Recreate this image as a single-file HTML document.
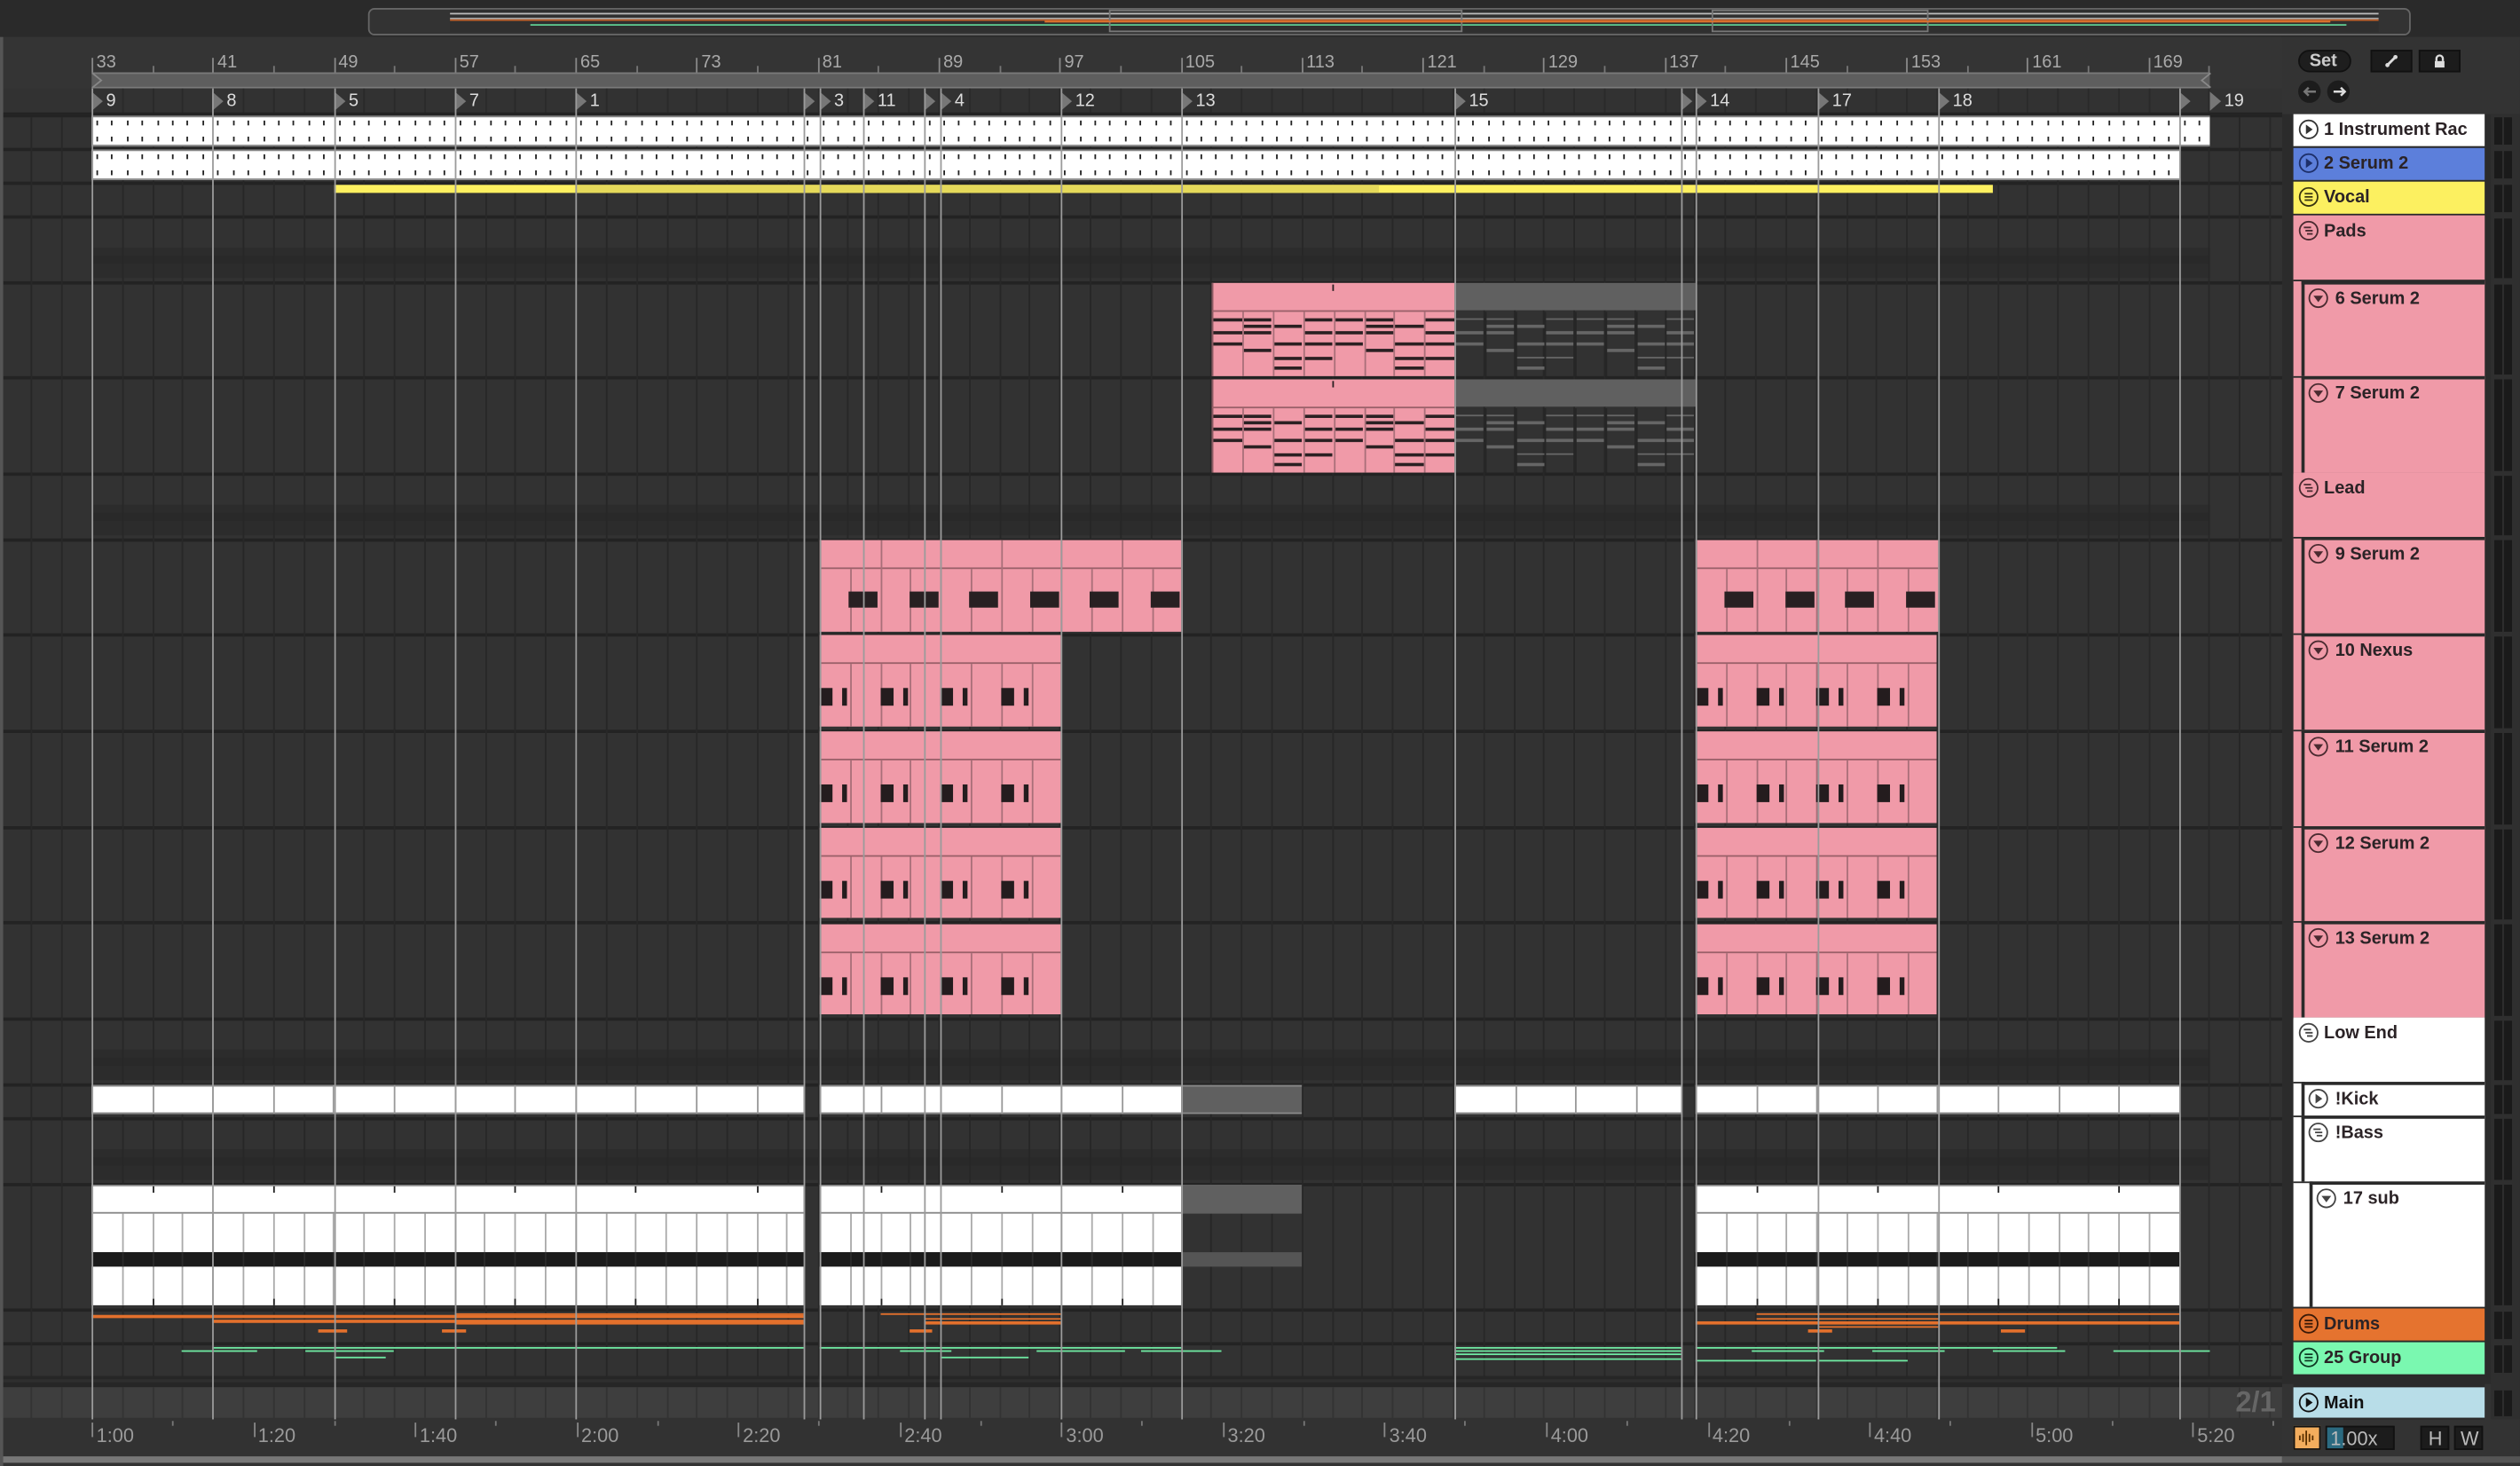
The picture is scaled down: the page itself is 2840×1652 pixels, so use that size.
<!DOCTYPE html>
<html><head><meta charset="utf-8">
<style>
html,body{margin:0;padding:0;background:#2b2b2b;width:2840px;height:1652px;overflow:hidden}
#r{position:absolute;left:0;top:0;width:1568px;height:912px;transform:scale(1.81122,1.8114);transform-origin:0 0;background:#2e2e2e;font-family:"Liberation Sans",sans-serif;overflow:hidden}
#r div{position:absolute;box-sizing:border-box}
.t{font-size:11px;color:#a9a9a9;white-space:nowrap;line-height:11px}
.h{font-size:11px;font-weight:bold;color:#2a2326;white-space:nowrap;line-height:12px}
</style></head><body>
<div id="r"></div>
<script>
const R=document.getElementById('r');
function box(x,y,w,h,st,html){const d=document.createElement('div');d.style.cssText=`left:${x}px;top:${y}px;width:${w}px;height:${h}px;${st||''}`;if(html!==undefined)d.innerHTML=html;R.appendChild(d);return d;}
function txt(x,y,s,cls,st){const d=document.createElement('div');d.className=cls||'t';d.style.cssText=`left:${x}px;top:${y}px;${st||''}`;d.textContent=s;R.appendChild(d);return d;}
const B=9.41; // px per bar
const X0=57;
// top strip
box(0,0,1568,23,'background:#2a2a2a');
box(229,5,1271,17,'border:1.5px solid #666;border-radius:4px;background:#333');
box(280,6,1200,14,'background:#2f2f2f');
box(280,8,1200,1,'background:#bbb');box(280,11,1200,1,'background:#aaa');
box(280,12,1200,1,'background:#c0612a');box(330,15,1130,1,'background:#5fc98f');
box(690,6,220,14,'border:1px solid #777');box(1065,6,135,14,'border:1px solid #777');
box(650,13,800,1,'background:#e0752e');
// ruler area
box(0,23,1420,48,'background:#343434');
box(1420,23,148,48,'background:#333');
const bars=[33,41,49,57,65,73,81,89,97,105,113,121,129,137,145,153,161,169];
bars.forEach((b,i)=>{const x=X0+i*8*B;box(x,36,1,9,'background:#888');txt(x+3,34,String(b));box(x+4*B,41,1,4,'background:#777');});
box(X0,45,1318,10,'background:#5e5e5e');
box(X0,45,1318,1,'background:#7a7a7a');
box(X0,54,1318,1,'background:#7a7a7a');
R.insertAdjacentHTML('beforeend','<svg style="position:absolute;left:57px;top:45px" width="8" height="10"><path d="M0.5 0.5 L6 5 L0.5 9.5" fill="none" stroke="#888" stroke-width="1"/></svg><svg style="position:absolute;left:1366px;top:45px" width="10" height="10"><path d="M9.5 0.5 L4 5 L9.5 9.5" fill="none" stroke="#888" stroke-width="1"/></svg>');
// locators
const locs=[[57,'9'],[132,'8'],[208,'5'],[283,'7'],[358,'1'],[500,''],[510,'3'],[537,'11'],[575,''],[585,'4'],[660,'12'],[735,'13'],[905,'15'],[1046,''],[1055,'14'],[1131,'17'],[1206,'18'],[1356,''],[1375,'19']];
box(0,55,1420,16,'background:#323232');
for(let x=X0;x<1375;x+=B*2)box(Math.round(x),55,1,16,'background:#2a2a2a');
locs.forEach(([x,n])=>{R.insertAdjacentHTML('beforeend',`<svg style="position:absolute;left:${x}px;top:57px" width="8" height="12"><path d="M0 0 L7 6 L0 12Z" fill="#777"/></svg>`);if(n)txt(x+9,58,n,'t','color:#ddd');});
box(0,70,1420,1,'background:#222');
// lanes
const lanes=[[71,92],[92,113],[113,134],[134,175],[175,234],[234,294],[294,335],[335,394],[394,454],[454,514],[514,573],[573,633],[633,674],[674,695],[695,736],[736,814],[814,835],[835,856]];
lanes.forEach(([a,b])=>{box(0,a,1420,b-a,'background:#323232');box(0,a,1420,2,'background:#232323');});
// group lane overview shading
[[134,175],[294,335],[633,674],[695,736]].forEach(([a,b])=>{box(57,a+20,1318,b-a-22,'background:#2c2c2c');box(57,a+25,1318,5,'background:#292929');});
box(0,856,1420,7,'background:#262626');box(0,858,1420,2,'background:#2e2e2e');
box(0,863,1420,20,'background:#3e3e3e');
box(0,882,1568,30,'background:#323232');
// grid
for(let x=X0-3*B*2;x<1420;x+=B*2){const xx=Math.round(x);if(xx<0)continue;box(xx,73,1,783,'background:#272727');box(xx,863,1,19,'background:#333');}
// clips helpers
function pinkClip(x,w,a,b,hh){box(x,a,w,b-a,'background:#f09aa8;border-left:1px solid #9a6670');box(x,a+hh,w,1,'background:#9a6069');}
function segs(x,w,a,b,step,col){for(let s=x+step;s<x+w-1;s+=step)box(Math.round(s),a,1,b-a,'background:'+col);}
// track1 & 2 white clips with ticks
function whiteTick(a,b,x1,x2){box(x1,a,x2-x1,b-a,'background:#fff;border-top:1px solid #888;border-bottom:1px solid #888');for(let x=x1+3;x<x2;x+=B){box(Math.round(x),a+3,1,3,'background:#222');box(Math.round(x),b-6,1,3,'background:#222');}}
whiteTick(72,91,57,1375);
whiteTick(93,112,57,1356);
// vocal
box(208,115,1032,5,'background:#fdf060');box(358,115,500,5,'background:#e5d95a');
// Pads clips
const prow=[197.5,202,206.3,213,217.4,221.8,228.4];
const ppat=[[0,2,3],[0,1,2,4],[1,3,5,6],[0,2,3,5],[0,2,3],[0,1,2,4],[1,3,5,6],[0,2,3,5]];
[175,235].forEach(a=>{const off=a-175;
 box(754,a+1,151,58,'background:#f09aa8;border-left:1px solid #8a5a62');box(754,a+18,151,1,'background:#9a6069');
 box(905,a+1,150,17,'background:#606060');
 for(let i=0;i<8;i++){const sx=754+i*18.9;if(i>0){box(Math.round(sx),a+19,1,40,'background:#a96f79');}
   ppat[i].forEach(r=>box(sx+1,prow[r]+off,17.5,2,'background:#2a2022'));
   const gx=905+i*18.75;if(i>0)box(Math.round(gx),a+19,1,40,'background:#262626');
   ppat[i].forEach(r=>box(gx+1,prow[r]+off,17,1.6,'background:#666'));}
 box(829,a+2,1,4,'background:#2a2022');
});
// Lead 9 serum
function leadClip(x1,x2){box(x1,336,x2-x1,57,'background:#f09aa8;border-left:1px solid #8a5a62');box(x1,353,x2-x1,1,'background:#9a6069');
 for(let s=x1+18.8;s<x2-1;s+=18.8)box(Math.round(s),354,1,39,'background:#a96f79');
 for(let s=x1+18;s<x2-2;s+=37.6)box(s,368,Math.min(18,x2-s),10,'background:#282022');
 for(let s=x1+37.6;s<x2-1;s+=37.6)box(Math.round(s),336,1,18,'background:#a96f79');}
leadClip(510,735);leadClip(1055,1206);
// 10-13
[[395,453],[455,513],[515,572],[575,632]].forEach(([a,b])=>{[510,1055].forEach(x1=>{const x2=x1+150;
 box(x1,a,150,b-a-1,'background:#f09aa8;border-left:1px solid #8a5a62');box(x1,a+17,150,1,'background:#9a6069');
 for(let s=x1+18.8;s<x2-1;s+=18.8)box(Math.round(s),a+18,1,b-a-19,'background:#a96f79');
 for(let k=0;k<4;k++){const s=x1+k*37.6;box(s,a+33,8,11,'background:#241c1e');box(s+14,a+33,3,11,'background:#241c1e');}
});});
// Kick
function kick(x1,x2,gray){box(x1,675,x2-x1,18,'background:'+(gray?'#606060':'#fff')+';border-top:1px solid #888;border-bottom:1px solid #888');if(!gray)for(let s=x1+37.6;s<x2-1;s+=37.6)box(Math.round(s),675,1,18,'background:#999');}
kick(57,500);kick(510,735);kick(735,810,1);kick(905,1046);kick(1055,1356);
// sub
function sub(x1,x2,gray){
 if(gray){box(x1,737,x2-x1,18,'background:#606060');box(x1,779,x2-x1,9,'background:#555');return;}
 box(x1,737,x2-x1,18,'background:#fff;border-top:1px solid #888;border-bottom:1px solid #888');
 box(x1,755,x2-x1,24,'background:#fff');box(x1,779,x2-x1,9,'background:#1b1b1b');box(x1,788,x2-x1,24,'background:#fff');
 for(let s=x1+18.8;s<x2-1;s+=18.8){box(Math.round(s),755,1,24,'background:#aaa');box(Math.round(s),788,1,24,'background:#aaa');box(Math.round(s),779,1,9,'background:#2a2a2a');}
 for(let s=x1+37.6;s<x2-1;s+=75.2){box(Math.round(s),738,1,4,'background:#222');box(Math.round(s),808,1,4,'background:#222');}}
sub(57,500);sub(510,735);sub(735,810,1);sub(1055,1356);
// drums (orange)
const O='#e3702c';
[[57,500,818],[132,500,821],[283,500,816.5],[283,500,822],[198,216,827],[275,290,827],[548,660,816.5],[575,660,819.5],[575,660,822],[566,580,827],
 [1055,1356,822],[1093,1356,816.5],[1093,1206,819.5],[1131,1206,824.5],[1125,1140,827],[1245,1260,827]].forEach(([a,b,y])=>box(a,y,b-a,1.6,'background:'+O));
// group (green)
const G='#6fe9a2';
[[132,500,837.5],[113,160,839.6],[190,245,839.6],[208,240,843.6],[510,735,837.5],[560,592,839.6],[585,640,843.6],[645,700,839.6],[710,760,839.6],
 [905,1046,837.5],[905,1046,839.6],[905,1046,842],[905,1046,844.5],[1055,1280,837.5],[1090,1135,839.6],[1165,1210,839.6],[1240,1285,839.6],[1315,1375,839.6],[1055,1130,846],[1131,1187,846]].forEach(([a,b,y])=>box(a,y,b-a,1.4,'background:'+G));
// locator lines
locs.forEach(([x])=>{if(x<1375)box(x,55,1,828,'background:#9b9b9b');});
// bottom ruler
const tl=['1:00','1:20','1:40','2:00','2:20','2:40','3:00','3:20','3:40','4:00','4:20','4:40','5:00','5:20'];
tl.forEach((s,i)=>{const x=57+i*100.55;box(x,885,1,9,'background:#888');txt(x+3,887,s,'t','font-size:12px;line-height:12px;color:#9a9a9a');box(x+50,884,1,3,'background:#777');});
box(0,906,1420,4,'background:#777');
// 2/1
txt(1391,863,'2/1','t','font-size:18px;line-height:18px;font-weight:bold;color:#666');
// right panel
box(1420,71,148,841,'background:#333');
box(1420,71,7,790,'background:#2b2b2b');
box(1546,71,4,790,'background:#2b2b2b');
box(1550,71,18,812,'background:#2f2f2f');
// Set / buttons
box(1430,31,33,14,'background:#1e1e1e;border:1px solid #111;border-radius:7px');txt(1437,33,'Set','t','color:#ccc;font-weight:bold');
box(1475,31,26,14,'background:#1c1c1c;border:1px solid #111');
R.insertAdjacentHTML('beforeend','<svg style="position:absolute;left:1483px;top:33px" width="10" height="10"><path d="M2 8 L8 2" stroke="#ddd" stroke-width="1.6"/><circle cx="2.5" cy="7.5" r="1.3" fill="#ddd"/><circle cx="7.5" cy="2.5" r="1.3" fill="#ddd"/></svg>');
box(1505,31,26,14,'background:#1c1c1c;border:1px solid #111');
R.insertAdjacentHTML('beforeend','<svg style="position:absolute;left:1513px;top:33px" width="10" height="10"><path d="M3 5 V3.5 a2 2 0 0 1 4 0 V5" fill="none" stroke="#ddd" stroke-width="1.3"/><rect x="2" y="5" width="6" height="4" fill="#ddd"/></svg>');
box(1430,50,14,14,'background:#1c1c1c;border-radius:7px');box(1448,50,14,14,'background:#1c1c1c;border-radius:7px');
R.insertAdjacentHTML('beforeend','<svg style="position:absolute;left:1430px;top:50px" width="32" height="14"><path d="M11 7 H4 M6.5 4.5 L4 7 L6.5 9.5" fill="none" stroke="#777" stroke-width="1.4"/><path d="M22 7 H29 M26.5 4.5 L29 7 L26.5 9.5" fill="none" stroke="#ddd" stroke-width="1.4"/></svg>');
// headers
function icon(x,y,type,c){let inner='';
 if(type=='play')inner=`<path d="M4.8 3.5 L9 6.5 L4.8 9.5Z" fill="${c}"/>`;
 else if(type=='down')inner=`<path d="M3.5 5 L9.5 5 L6.5 9Z" fill="${c}"/>`;
 else if(type=='grp')inner=`<path d="M4 4.5H9M4 6.5H9M4 8.5H9" stroke="${c}" stroke-width="1"/>`;
 else inner=`<path d="M3.5 4.5H8M4.5 6.5H9M5.5 8.5H9" stroke="${c}" stroke-width="1"/>`;
 R.insertAdjacentHTML('beforeend',`<svg style="position:absolute;left:${x}px;top:${y}px" width="13" height="13"><circle cx="6.5" cy="6.5" r="5.6" fill="none" stroke="${c}" stroke-width="1"/>${inner}</svg>`);}
const P='#f09aa8',W='#ffffff';
// group backgrounds
box(1427,134,119,499,'background:'+P);
box(1427,633,119,180,'background:'+W);
const hd=[[71,91,'1 Instrument Rac',W,0,'play','#333'],[92,112,'2 Serum 2','#5c7fdb',0,'play','#1d2f6a'],[113,133,'Vocal','#fcf060',0,'grp','#3a3510'],
[134,174,'Pads',P,0,'grp2','#4a2a30'],[175,234,'6 Serum 2',P,1,'down','#4a2a30'],[234,294,'7 Serum 2',P,1,'down','#4a2a30'],[294,334,'Lead',P,0,'grp2','#4a2a30'],
[334,394,'9 Serum 2',P,1,'down','#4a2a30'],[394,454,'10 Nexus',P,1,'down','#4a2a30'],[454,514,'11 Serum 2',P,1,'down','#4a2a30'],[514,573,'12 Serum 2',P,1,'down','#4a2a30'],[573,633,'13 Serum 2',P,1,'down','#4a2a30'],
[633,673,'Low End',W,0,'grp2','#444'],[673,694,'!Kick',W,1,'play','#444'],[694,735,'!Bass',W,1,'grp2','#444'],[735,813,'17 sub',W,2,'down','#444'],
[814,834,'Drums','#e5732f',0,'grp','#3a1a08'],[835,855,'25 Group','#7af8b0',0,'grp','#0f3a24'],[863,882,'Main','#b8dde8',0,'play','#111']];
hd.forEach(([a,b,n,c,ind,ic,icc])=>{const x=1427+ind*5;
 box(x,a,1546-x,b-a,'background:'+c+(ind?';border-left:2px solid #2a2a2a;border-top:2px solid #2a2a2a':''));
 box(1427,b,119,1,'background:#2a2a2a');
 icon(x+3+(ind?1:0),a+3+(ind?1:0),ic,icc);
 txt(x+19+(ind?2:0),a+4+(ind?1:0),n,'h','color:'+(n=='Main'?'#111':'#2b2326'));
 // meter
 box(1552,a+2,5,b-a-3,'background:#1a1a1a');box(1558,a+2,5,b-a-3,'background:#1a1a1a');
});
box(1427,91,119,1,'background:#2a2a2a');box(1427,856,119,7,'background:#2b2b2b');
// bottom controls
box(1427,887,17,15,'background:#f3ad5d;border:1px solid #111');
R.insertAdjacentHTML('beforeend','<svg style="position:absolute;left:1429px;top:889px" width="13" height="11"><path d="M2 4V7M4 3V8M6 1V10M8 3V8M10 4V7" stroke="#5a3000" stroke-width="1"/></svg>');
box(1447,887,43,15,'background:#1c1c1c;border:1px solid #111');box(1448,888,10,13,'background:#2b6a80');
txt(1450,889,'1.00x','t','font-size:12px;line-height:12px;color:#bbb');
box(1506,887,18,15,'background:#1c1c1c;border:1px solid #111');txt(1511,889,'H','t','font-size:12px;line-height:12px;color:#bbb');
box(1527,887,18,15,'background:#1c1c1c;border:1px solid #111');txt(1531,889,'W','t','font-size:12px;line-height:12px;color:#bbb');
box(1420,906,148,4,'background:#555');
box(0,23,2,889,'background:#555');
</script>
</body></html>
